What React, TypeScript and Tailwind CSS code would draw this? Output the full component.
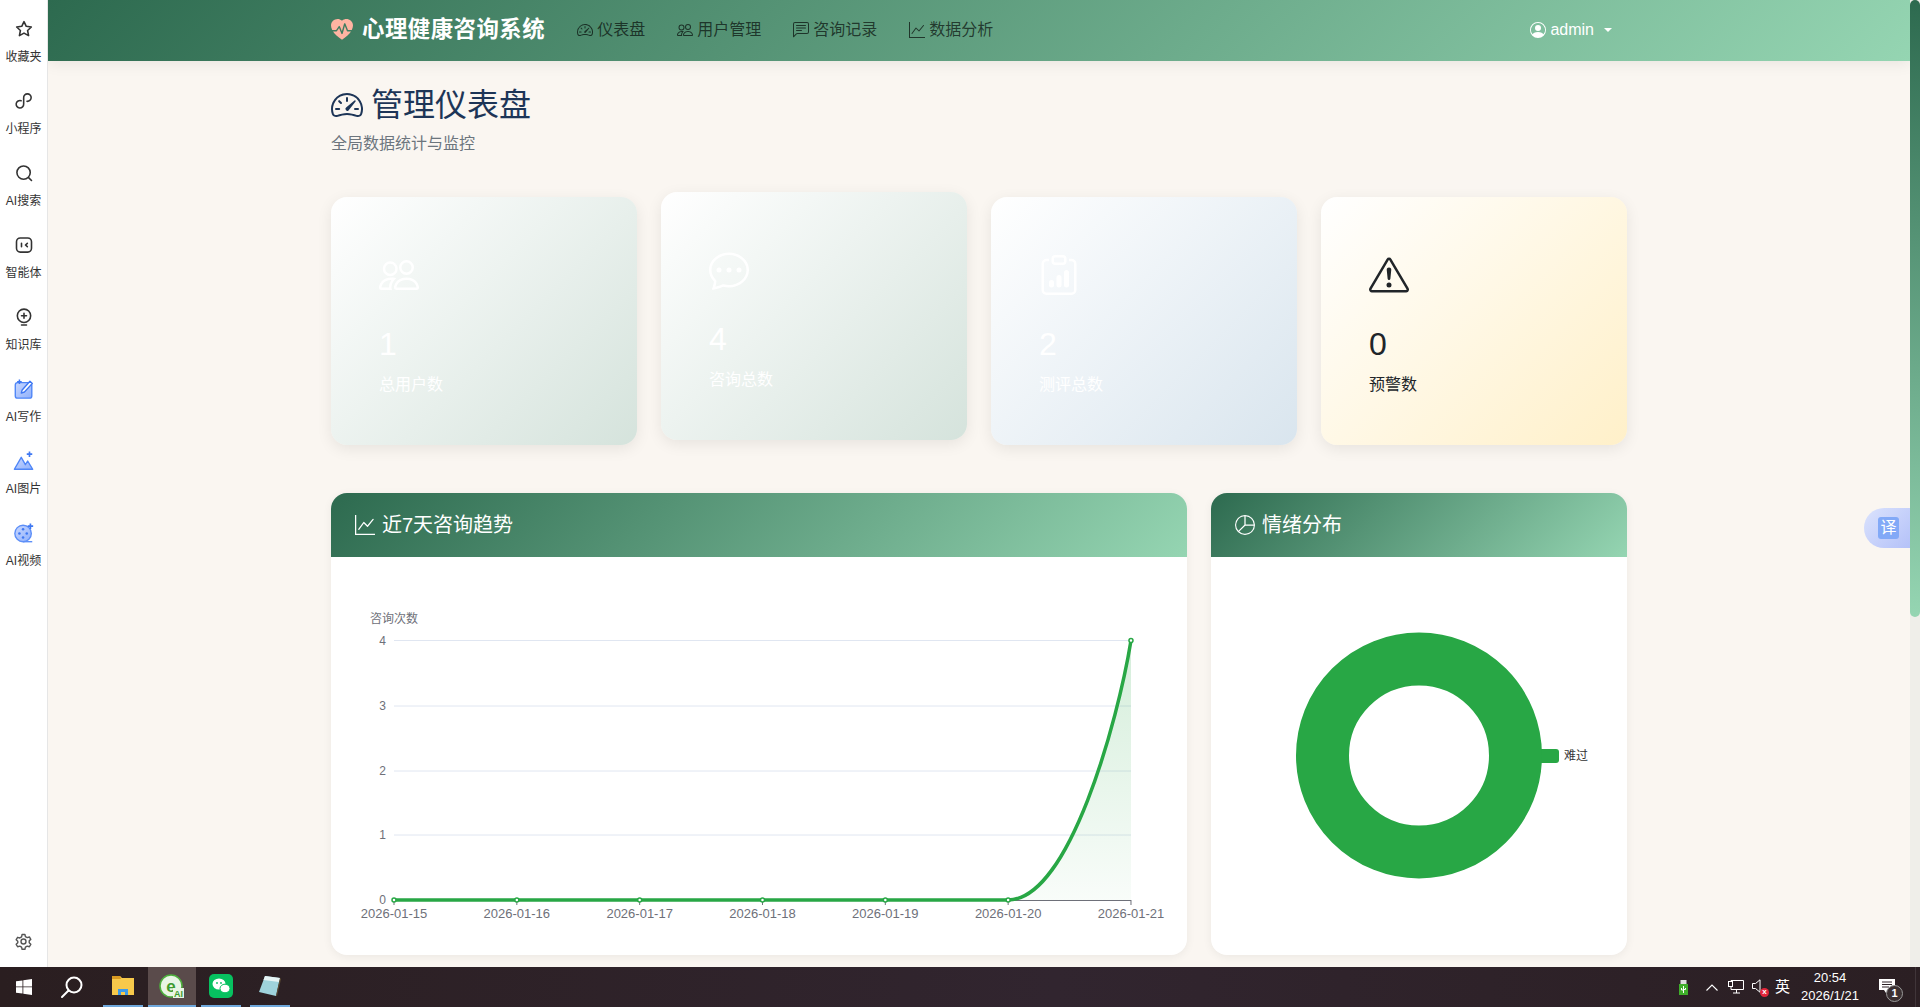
import React from "react";
import {
  BsChatDots,
  BsChatLeftText,
  BsClipboardData,
  BsExclamationTriangle,
  BsGraphUp,
  BsHeartPulseFill,
  BsPeople,
  BsPersonCircle,
  BsPieChart,
  BsSpeedometer2,
} from "react-icons/bs";

const FONT = { fontFamily: '"Liberation Sans", "Noto Sans CJK SC", sans-serif' };

// left rail icons
const Outline: React.FC<{ children: React.ReactNode; size?: number }> = ({ children, size = 20 }) => (
  <svg width={size} height={size} viewBox="0 0 24 24" fill="none" stroke="#333" strokeWidth="1.9" strokeLinecap="round" strokeLinejoin="round">
    {children}
  </svg>
);

const BlueDefs: React.FC<{ id: string }> = ({ id }) => (
  <defs>
    <linearGradient id={id} x1="0" y1="0" x2="1" y2="1">
      <stop offset="0" stopColor="#c9d8ff" />
      <stop offset="1" stopColor="#8fb0fb" />
    </linearGradient>
  </defs>
);

const railTop = [
  {
    label: "收藏夹",
    icon: (
      <Outline>
        <path d="M12 3.2l2.7 5.6 6.1.8-4.5 4.2 1.2 6.1-5.500-3-5.500 3 1.200-6.100-4.500-4.200 6.100-.8z" />
      </Outline>
    ),
  },
  {
    label: "小程序",
    icon: (
      <Outline>
        <path d="M8.6 11.6A4.500 4.500 0 1 0 11.6 15.600V8.200A4.500 4.500 0 1 1 15.600 12.400" />
      </Outline>
    ),
  },
  {
    label: "AI搜索",
    icon: (
      <Outline>
        <circle cx="11.5" cy="11.5" r="8" />
        <path d="M17.5 17.5l3.5 3.5" />
      </Outline>
    ),
  },
  {
    label: "智能体",
    icon: (
      <Outline>
        <rect x="3" y="3.5" width="18" height="17" rx="4.5" />
        <path d="M9 10v4M16 10l-2.2 2 2.2 2" />
      </Outline>
    ),
  },
  {
    label: "知识库",
    icon: (
      <Outline>
        <circle cx="12" cy="10.5" r="8" />
        <path d="M9 21.5h6M12 7.5v6M9 10.5h6" />
      </Outline>
    ),
  },
  {
    label: "AI写作",
    icon: (
      <svg width="22" height="22" viewBox="0 0 24 24" fill="none">
        <BlueDefs id="railWrite" />
        <rect x="2.5" y="5" width="18" height="17" rx="2.5" fill="url(#railWrite)" stroke="#4f86f7" strokeWidth="1.5" />
        <path d="M9 16.5l1-3.5 8.5-9.5 2.6 2.4-8.6 9.4z" fill="#fff" stroke="#3f78f2" strokeWidth="1.5" strokeLinejoin="round" />
        <path d="M7 1.5v5M4.5 4h5" stroke="#3f78f2" strokeWidth="1.6" />
      </svg>
    ),
  },
  {
    label: "AI图片",
    icon: (
      <svg width="22" height="22" viewBox="0 0 24 24" fill="none">
        <BlueDefs id="railImage" />
        <path d="M1.5 21L9 8l4.5 8 2.5-4 5.5 9z" fill="url(#railImage)" stroke="#4f86f7" strokeWidth="1.5" strokeLinejoin="round" />
        <path d="M18 1.5v6M15 4.5h6" stroke="#3f78f2" strokeWidth="1.8" />
      </svg>
    ),
  },
  {
    label: "AI视频",
    icon: (
      <svg width="22" height="22" viewBox="0 0 24 24" fill="none">
        <BlueDefs id="railVideo" />
        <circle cx="11" cy="12.5" r="9" fill="url(#railVideo)" stroke="#5d8ff8" strokeWidth="1.5" />
        <path d="M11 21.5h10" stroke="#5d8ff8" strokeWidth="1.5" />
        <circle cx="11" cy="8" r="1.4" fill="#3f78f2" />
        <circle cx="7" cy="12.5" r="1.4" fill="#3f78f2" />
        <circle cx="15" cy="12.5" r="1.4" fill="#3f78f2" />
        <circle cx="11" cy="17" r="1.4" fill="#3f78f2" />
        <path d="M19 1.5v6M16 4.5h6" stroke="#3f78f2" strokeWidth="1.8" />
      </svg>
    ),
  },
];

const Sidebar: React.FC = () => (
  <aside className="w-12 shrink-0 bg-white border-r border-[#e6e6e6] flex flex-col items-center pt-[18px] pb-[17px]">
    {railTop.map((item) => (
      <div key={item.label} className="h-[72px] w-full flex flex-col items-center">
        <div className="h-[22px] flex items-center justify-center">{item.icon}</div>
        <span className="mt-2 text-xs leading-[18px] text-[#333] whitespace-nowrap">{item.label}</span>
      </div>
    ))}
    <div className="mt-auto">
      <svg width="17" height="17" viewBox="0 0 24 24" fill="none" stroke="#555" strokeWidth="2" strokeLinejoin="round">
        <circle cx="12" cy="12" r="3.5" />
        <path d="M10 2h4l.7 3 2.6 1.5 3-.9 2 3.400-2.200 2.100v2.800l2.200 2.100-2 3.400-3-.9-2.600 1.500-.7 3h-4l-.7-3-2.600-1.500-3 .9-2-3.400 2.200-2.100V11.600L1.700 9.500l2-3.400 3 .9L9.300 5.500z" />
      </svg>
    </div>
  </aside>
);

const navLinks = [
  { label: "仪表盘", icon: <BsSpeedometer2 /> },
  { label: "用户管理", icon: <BsPeople /> },
  { label: "咨询记录", icon: <BsChatLeftText /> },
  { label: "数据分析", icon: <BsGraphUp /> },
];

const Navbar: React.FC = () => (
  <header className="h-[61px] shrink-0 bg-[linear-gradient(135deg,#2d6a4f,#95d5b2)] shadow-[0_2px_15px_rgba(0,0,0,0.08)] z-10 flex items-center pb-[2px] pl-[283px] pr-[298px]">
    <BsHeartPulseFill className="text-[22px] text-[#ffb4a2]" />
    <span className="ml-[9px] text-[22.4px] font-bold tracking-[0.5px] text-white whitespace-nowrap">心理健康咨询系统</span>
    <nav className="ml-[16px] flex items-center">
      {navLinks.map((link) => (
        <a key={link.label} className="px-4 flex items-center gap-1 text-base text-black/65 whitespace-nowrap">
          <span className="text-base">{link.icon}</span>
          {link.label}
        </a>
      ))}
    </nav>
    <div className="ml-auto flex items-center text-white text-base">
      <BsPersonCircle className="text-base" />
      <span className="ml-1">admin</span>
      <span className="ml-[10px] w-0 h-0 border-x-[4px] border-x-transparent border-t-[4px] border-t-white" />
    </div>
  </header>
);

const stats = [
  { label: "总用户数", value: "1", icon: <BsPeople />, bg: "bg-[linear-gradient(135deg,#ffffff,#d5e3dc)]", text: "text-white", shift: "" },
  { label: "咨询总数", value: "4", icon: <BsChatDots />, bg: "bg-[linear-gradient(135deg,#ffffff,#d5e3dc)]", text: "text-white", shift: "-mt-[5px] mb-[5px]" },
  { label: "测评总数", value: "2", icon: <BsClipboardData />, bg: "bg-[linear-gradient(135deg,#ffffff,#d9e5ee)]", text: "text-white", shift: "" },
  { label: "预警数", value: "0", icon: <BsExclamationTriangle />, bg: "bg-[linear-gradient(135deg,#ffffff,#fff0c9)]", text: "text-[#212529]", shift: "" },
];

const StatCard: React.FC<(typeof stats)[number]> = ({ label, value, icon, bg, text, shift }) => (
  <div className={`${bg} ${text} ${shift} h-[248px] rounded-2xl p-12 shadow-[0_4px_15px_rgba(0,0,0,0.08)]`}>
    <div className="h-[60px] flex items-center text-[40px]">{icon}</div>
    <div className="mt-[20px] text-[32px] leading-[38px]">{value}</div>
    <div className="mt-[10px] text-base leading-6">{label}</div>
  </div>
);

const ChartCard: React.FC<{ title: string; icon: React.ReactNode; children: React.ReactNode }> = ({ title, icon, children }) => (
  <section className="bg-white rounded-2xl overflow-hidden shadow-[0_2px_10px_rgba(0,0,0,0.06)]">
    <div className="h-16 px-6 flex items-center gap-[7px] text-white text-xl bg-[linear-gradient(135deg,#2d6a4f,#95d5b2)]">
      <span className="text-xl">{icon}</span>
      {title}
    </div>
    {children}
  </section>
);

const days = ["2026-01-15", "2026-01-16", "2026-01-17", "2026-01-18", "2026-01-19", "2026-01-20", "2026-01-21"];
const gridRows = [
  { y: 83.5, label: "4" },
  { y: 149, label: "3" },
  { y: 214, label: "2" },
  { y: 278, label: "1" },
  { y: 343, label: "0" },
];
const dayX = (i: number) => 63 + i * 122.83;

const TrendChart: React.FC = () => (
  <svg viewBox="0 0 856 398" className="block w-full h-[398px]" style={FONT}>
    <defs>
      <linearGradient id="trendFill" x1="0" y1="0" x2="0" y2="1">
        <stop offset="0" stopColor="#28a745" stopOpacity="0.2" />
        <stop offset="1" stopColor="#28a745" stopOpacity="0.03" />
      </linearGradient>
    </defs>
    <text x="39" y="66" fontSize="12" fill="#6e7079">咨询次数</text>
    {gridRows.map((row) => (
      <g key={row.label}>
        {row.label !== "0" && <line x1="63" x2="800" y1={row.y} y2={row.y} stroke="#e0e6f1" />}
        <text x="55" y={row.y + 4} fontSize="12" textAnchor="end" fill="#6e7079">{row.label}</text>
      </g>
    ))}
    <path d="M677 343C738.500 343 787 163 800 83.500V343Z" fill="url(#trendFill)" />
    <line x1="63" x2="800" y1="343.500" y2="343.500" stroke="#6e7079" />
    {days.map((day, i) => (
      <g key={day}>
        <line x1={dayX(i)} x2={dayX(i)} y1="343" y2="348" stroke="#6e7079" />
        <text x={dayX(i)} y="361" fontSize="13" textAnchor="middle" fill="#6e7079">{day}</text>
      </g>
    ))}
    <path d="M63 343H677C738.500 343 787 163 800 83.500" fill="none" stroke="#28a745" strokeWidth="3.5" />
    {days.map((day, i) => (
      <circle key={day} cx={dayX(i)} cy={i === 6 ? 83.5 : 343} r="2" fill="#fff" stroke="#28a745" strokeWidth="1.500" />
    ))}
  </svg>
);

const MoodChart: React.FC = () => (
  <svg viewBox="0 0 416 398" className="block w-full h-[398px]" style={FONT}>
    <rect x="323" y="192" width="25" height="14" rx="3" fill="#28a745" />
    <circle cx="208" cy="198.500" r="96.500" fill="none" stroke="#28a745" strokeWidth="53" />
    <text x="353" y="203" fontSize="12" fill="#333">难过</text>
  </svg>
);

const Dashboard: React.FC = () => (
  <main className="w-[1296px] ml-[283px]">
    <h1 className="mt-6 flex items-center gap-2 text-[32px] leading-[40px] text-[#1d3557]">
      <BsSpeedometer2 />
      管理仪表盘
    </h1>
    <p className="mt-[7px] text-base leading-6 text-[#6c757d]">全局数据统计与监控</p>
    <div className="mt-[41px] grid grid-cols-4 gap-6">
      {stats.map((stat) => (
        <StatCard key={stat.label} {...stat} />
      ))}
    </div>
    <div className="mt-12 grid grid-cols-[856px_416px] gap-6">
      <ChartCard title="近7天咨询趋势" icon={<BsGraphUp />}>
        <TrendChart />
      </ChartCard>
      <ChartCard title="情绪分布" icon={<BsPieChart />}>
        <MoodChart />
      </ChartCard>
    </div>
  </main>
);

// windows taskbar
const TaskApp: React.FC<{ children: React.ReactNode; active?: boolean; width?: string }> = ({ children, active, width = "w-[49px]" }) => (
  <div className={`${width} h-10 flex items-center justify-center border-b-2 border-[#6fa8dc] ${active ? "bg-[#5a4b4b]" : ""}`}>{children}</div>
);

const Taskbar: React.FC = () => (
  <footer className="h-10 shrink-0 flex items-center text-white bg-[linear-gradient(90deg,#2a1e20,#31252f_55%,#2b1f23)]">
    <div className="w-12 flex justify-center">
      <svg width="16" height="16" viewBox="0 0 16 16" fill="#fff">
        <path d="M0 2.300L6.500 1.400V7.500H0zM7.300 1.300L16 0V7.500H7.300zM0 8.300H6.500V14.500L0 13.700zM7.300 8.300H16V16L7.300 14.700z" />
      </svg>
    </div>
    <div className="w-12 flex justify-center">
      <svg width="24" height="24" viewBox="0 0 24 24" fill="none" stroke="#fff" strokeWidth="2">
        <circle cx="14" cy="10" r="7.500" />
        <path d="M8.500 15.500L2 22" strokeLinecap="round" />
      </svg>
    </div>
    <div className="ml-[7px] flex items-center gap-[5px]">
      <TaskApp width="w-10">
        <svg width="24" height="22" viewBox="0 0 24 22">
          <path d="M1 1h8l2 2h12v17H1z" fill="#f7c94b" />
          <path d="M1 1h8l1 3H1z" fill="#d99a22" />
          <path d="M7 20v-6h10v6h-3v-3h-4v3z" fill="#3d9be9" />
        </svg>
      </TaskApp>
      <TaskApp active width="w-12">
        <svg width="26" height="26" viewBox="0 0 26 26">
          <circle cx="12" cy="13" r="11" fill="#e8f5e4" stroke="#4caf3c" strokeWidth="1.500" />
          <text x="12" y="19" fontSize="17" fontWeight="bold" textAnchor="middle" fill="#3e9b2f" style={FONT}>e</text>
          <rect x="14" y="15" width="11" height="10" fill="#e8f5e4" />
          <text x="19.500" y="24" fontSize="9" fontWeight="bold" textAnchor="middle" fill="#3e9b2f" style={FONT}>AI</text>
        </svg>
      </TaskApp>
      <TaskApp width="w-10">
        <svg width="24" height="24" viewBox="0 0 24 24">
          <rect width="24" height="24" rx="5" fill="#07c160" />
          <ellipse cx="10" cy="10" rx="6.500" ry="5.500" fill="#fff" />
          <ellipse cx="16" cy="14.500" rx="5" ry="4.300" fill="#fff" stroke="#07c160" />
          <circle cx="8" cy="9" r="0.900" fill="#07c160" />
          <circle cx="12" cy="9" r="0.900" fill="#07c160" />
        </svg>
      </TaskApp>
      <div className="ml-[4px]">
        <TaskApp width="w-10">
          <svg width="24" height="24" viewBox="0 0 24 24">
            <path d="M7 2l15 2-4 18L1 18z" fill="#9fd3dc" />
            <path d="M7 2l15 2-1 4L5.500 6z" fill="#e6f4f5" />
            <path d="M18 22l4-18 1 1-4 17z" fill="#5a4a32" />
          </svg>
        </TaskApp>
      </div>
    </div>
    <div className="ml-auto flex items-center pr-[4px]" style={FONT}>
      <svg width="9" height="15" viewBox="0 0 9 15">
        <rect x="1.500" width="6" height="4" fill="#ddd" />
        <rect y="4" width="9" height="11" fill="#3fae2a" />
        <path d="M4.500 6v7M2.500 8v2h2M6.500 8v1.500h-2" stroke="#fff" fill="none" />
      </svg>
      <svg className="ml-[18px]" width="12" height="7" viewBox="0 0 12 7" fill="none" stroke="#fff" strokeWidth="1.100">
        <path d="M0.500 6.500L6 1l5.500 5.500" />
      </svg>
      <svg className="ml-[10px]" width="16" height="14" viewBox="0 0 16 14" fill="none" stroke="#fff">
        <path d="M3 .5h12.500v9H3zM5 13h7M8.500 9.500V13" />
        <rect x="0.500" y="1.500" width="4" height="5" fill="#2c2126" />
      </svg>
      <div className="ml-[8px] relative w-[20px] h-[16px]">
        <svg width="9" height="14" viewBox="0 0 9 14" fill="none" stroke="#fff">
          <path d="M.5 4.500h3L8 .8v12.400L3.500 9.500h-3z" />
        </svg>
        <span className="absolute right-[3px] bottom-[-2px] w-[9px] h-[9px] rounded-full bg-[#e2263a] text-[8px] leading-[8px] text-center font-bold">x</span>
      </div>
      <span className="ml-[3px] text-[15px] leading-5">英</span>
      <div className="w-20 text-center text-[13px] leading-[18px]">
        <div>20:54</div>
        <div>2026/1/21</div>
      </div>
      <div className="ml-[9px] relative w-[26px] h-[22px]">
        <svg className="mt-[3px]" width="16" height="15" viewBox="0 0 16 15" fill="#fff">
          <path d="M0 0h16v11H9l-2 3-2-3H0z" />
          <path d="M3 3h10M3 5.500h10M3 8h7" stroke="#2c2126" />
        </svg>
        <span className="absolute right-[2px] bottom-[-4px] w-[17px] h-[17px] rounded-full bg-[#3a3032] border border-[#9a9a9a] text-[11px] leading-[15px] text-center font-bold">1</span>
      </div>
      <div className="ml-[10px] w-px h-10 bg-white/10" />
    </div>
  </footer>
);

const TranslateTab: React.FC = () => (
  <div className="absolute right-0 top-[508px] w-[46px] h-10 rounded-l-[20px] bg-[linear-gradient(135deg,#dbe3fd,#b4c1f8)] flex items-center pl-[14px] z-20">
    <span className="w-[21px] h-[22px] rounded-[3px] bg-[#82a9f7] text-white text-base leading-[22px] text-center">译</span>
  </div>
);

export default function App() {
  return (
    <div className="h-screen flex flex-col overflow-hidden bg-[#faf6f1]" style={FONT}>
      <div className="flex-1 min-h-0 flex">
        <Sidebar />
        <div className="flex-1 min-w-0 relative flex flex-col overflow-hidden">
          <Navbar />
          <Dashboard />
          <TranslateTab />
        </div>
        <div className="w-2.5 shrink-0 bg-[#efeee9]">
          <div className="h-[617px] rounded-[5px] bg-[linear-gradient(180deg,#2d6a4f,#95d5b2)]" />
        </div>
      </div>
      <Taskbar />
    </div>
  );
}
